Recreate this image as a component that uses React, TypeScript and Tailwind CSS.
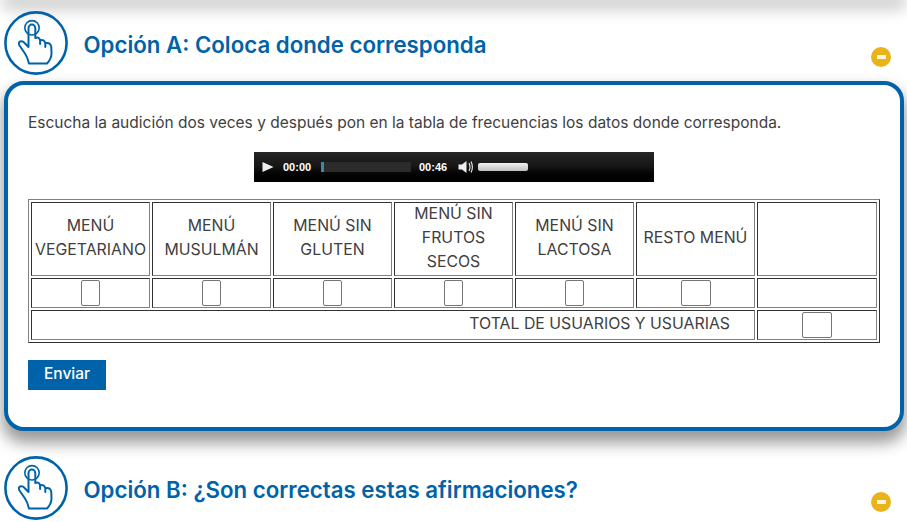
const font = { fontFamily: 'Inter, "Noto Sans", sans-serif' }

function HandIcon() {
  return (
    <svg viewBox="0 0 64 64" className="w-16 h-16 shrink-0" fill="none" stroke="#0063a9" strokeLinejoin="round" strokeLinecap="round">
      <circle cx="32" cy="32" r="30.6" strokeWidth="2.6" />
      <circle cx="28" cy="16.8" r="7.2" strokeWidth="1.6" />
      <path
        strokeWidth="2"
        d="M24.5 36 L24.5 17 a3.4 3.4 0 0 1 6.8 0 L31.3 27 q4 -1.5 4.8 2.5 q4 -1.5 5.2 2.8 q5.5 -1.2 6 4 L47.5 43 q-.3 5 -4.5 9.5 L25 52.5 Q23.5 46 21 42.5 L15.5 34.5 q-1.6 -3 .6 -4 q2.4 -1 4.2 1.2 L24.5 36 M36.1 29.5 L36.1 33 M41.3 32.3 L41.3 36"
      />
    </svg>
  )
}

function MinusIcon() {
  return (
    <span className="w-5 h-5 rounded-full bg-[#e9b419] flex items-center justify-center shrink-0">
      <span className="w-[9px] h-1 bg-[#fdf6dc]" />
    </span>
  )
}

function OptionHeader({ title }: { title: string }) {
  return (
    <div className="flex items-center pl-1 pr-4">
      <HandIcon />
      <h2 className="ml-[15.5px] mt-[3px] flex-1 text-[22.25px] leading-[30px] font-semibold text-[#0063a9]">{title}</h2>
      <span className="self-end mb-2">
        <MinusIcon />
      </span>
    </div>
  )
}

function Gap({ wide }: { wide?: boolean }) {
  return <input type="text" className={`${wide ? 'w-[30px]' : 'w-[19px]'} h-[26px] bg-white border border-[#767676] rounded-[2px] align-middle`} />
}

const cell = 'border border-t-[#333] border-l-[#333] border-r-[#808080] border-b-[#808080] p-0 text-center'
const heads = ['MENÚ VEGETARIANO', 'MENÚ MUSULMÁN', 'MENÚ SIN GLUTEN', 'MENÚ SIN FRUTOS SECOS', 'MENÚ SIN LACTOSA', 'RESTO MENÚ']

function AudioPlayer() {
  return (
    <div className="w-[400px] h-[30px] ml-[226px] mt-[18px] flex items-center bg-gradient-to-b from-[#262626] via-[#151515] to-[#000] text-white text-[11px] font-bold" style={{ fontFamily: '"Liberation Sans", sans-serif' }}>
      <svg viewBox="0 0 12 12" className="w-3 h-3 ml-2 shrink-0"><path d="M0.5 1 L11.5 6 L0.5 11 Z" fill="#eee" /></svg>
      <span className="ml-[9px] w-[28px]">00:00</span>
      <div className="ml-[10px] w-[90px] h-[10px] bg-[#2b2b2b] rounded-[1px]">
        <div className="w-[3px] h-full bg-[#3f87a6]" />
      </div>
      <span className="ml-2 w-[28px]">00:46</span>
      <svg viewBox="0 0 16 14" className="w-4 h-[14px] ml-[11px] shrink-0">
        <path d="M0.5 4.5 H4 L8.5 1 V13 L4 9.5 H0.5 Z" fill="#eee" />
        <path d="M11 3 Q13 7 11 11 M13 1.5 Q15.8 7 13 12.5" stroke="#eee" strokeWidth="1.1" fill="none" />
      </svg>
      <div className="ml-[4px] w-[50px] h-2 rounded-[2px] bg-gradient-to-b from-[#f0f0f0] to-[#bdbdbd]" />
    </div>
  )
}

export default function App() {
  return (
    <div className="w-[907px] h-[522px] overflow-hidden bg-white relative" style={font}>
      {/* sombra de la tarjeta anterior */}
      <div className="ml-1 mr-[3px] h-2 -mt-3 rounded-b-[20px] bg-white shadow-[0_10px_15px_4px_rgba(0,0,0,0.2)]" />

      <div className="pt-[15px]">
        <OptionHeader title="Opción A: Coloca donde corresponda" />
      </div>

      <div className="ml-1 mr-[3px] mt-[6px] h-[350px] rounded-[20px] border-4 border-[#0063a9] bg-white px-5 shadow-[0_10px_15px_2px_rgba(0,0,0,0.4)] text-[#404040]">
        <p className="mt-[27px] text-[15.5px] leading-[22px]">
          Escucha la audición dos veces y después pon en la tabla de frecuencias los datos donde corresponda.
        </p>
        <AudioPlayer />
        <table className="mt-[17px] w-[852px] table-fixed border-separate border-spacing-[2px] border border-t-[#808080] border-l-[#808080] border-r-[#333] border-b-[#333] text-[15.85px] leading-6">
          <colgroup>
            {heads.map(h => <col key={h} className="w-[119px]" />)}
            <col />
          </colgroup>
          <tbody>
            <tr className="h-[74px]">
              {heads.map(h => (
                <td key={h} className={cell}>
                  <div className="-mt-[2px]">{h}</div>
                </td>
              ))}
              <td className={cell} />
            </tr>
            <tr className="h-[30px]">
              {heads.map((h, i) => <td key={h} className={cell}><Gap wide={i === 5} /></td>)}
              <td className={cell} />
            </tr>
            <tr className="h-[30px]">
              <td colSpan={6} className={`${cell} !text-right pr-6`}>
                <div className="-mt-[2px]">TOTAL DE USUARIOS Y USUARIAS</div>
              </td>
              <td className={cell}><Gap wide /></td>
            </tr>
          </tbody>
        </table>
        <button type="button" className="mt-[17px] w-[78px] h-[30px] pb-[2px] bg-[#0063a9] text-white text-[15.5px] font-medium">Enviar</button>
      </div>

      <div className="pt-[25px]">
        <OptionHeader title="Opción B: ¿Son correctas estas afirmaciones?" />
      </div>
    </div>
  )
}
